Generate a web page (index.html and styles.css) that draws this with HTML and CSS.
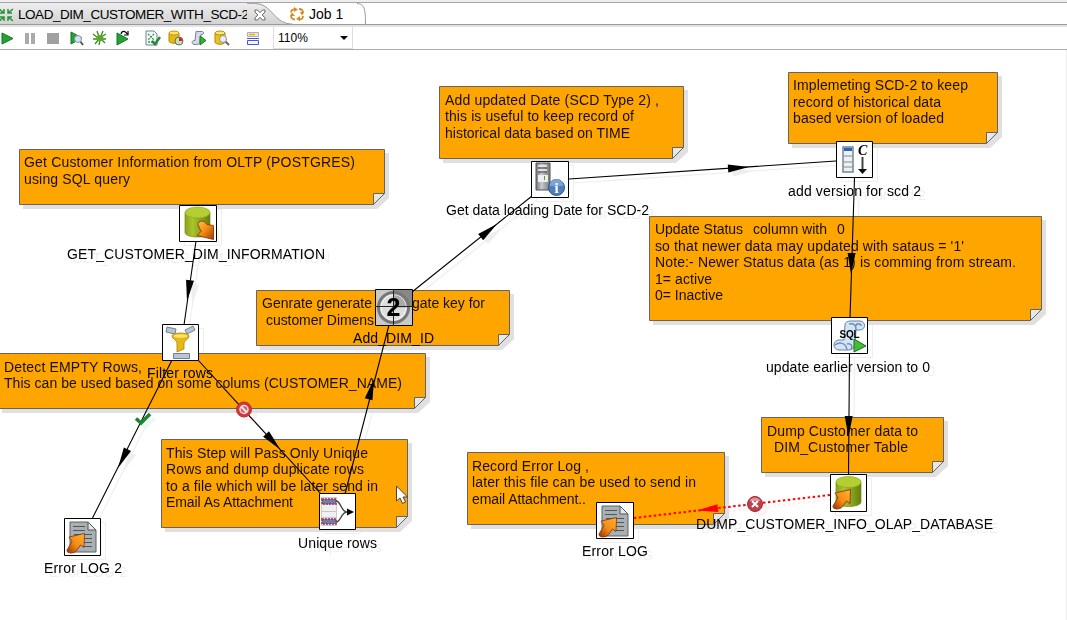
FILE: index.html
```html
<!DOCTYPE html>
<html lang="en">
<head>
<meta charset="utf-8">
<title>LOAD_DIM_CUSTOMER_WITH_SCD-2</title>
<link rel="stylesheet" href="styles.css">
</head>
<body>
<div class="app">
  <header class="tabs">
    <div class="tab tab-active">
      <svg class="tab-icon" viewBox="0 0 14 14"><g class="green-stroke"><path d="M0 1l5 4M5 1v4H1M14 1L9 5M9 1v4h4M0 13l5-4M5 13V9H1M14 13L9 9M9 13V9h4"/></g></svg>
      <span class="tab-title">LOAD_DIM_CUSTOMER_WITH_SCD-2</span>
      <svg class="tab-close" viewBox="0 0 12 12"><path d="M1 1h2.500L6 3.700 8.500 1H11v2L8.200 6 11 9v2H8.500L6 8.300 3.500 11H1V9l2.800-3L1 3z" fill="#fff" stroke="#666"/></svg>
    </div>
    <svg class="tab-curve" viewBox="0 0 48 22"><defs><linearGradient id="tabfill" x2="0" y2="1"><stop stop-color="#eee"/><stop offset="1" stop-color="#d2d2d2"/></linearGradient></defs><path d="M0 0H8C26 1 26 21 44 21H0z" fill="url(#tabfill)"/><path d="M0 .3H8C26 1 26 21 46 21.300" fill="none" stroke="#999"/></svg>
    <div class="tab tab-job">
      <svg class="job-icon" viewBox="0 0 14 14"><g fill="none" stroke="#dc8a20" stroke-width="1.800"><path d="M1 5.500C1 3 3 2 5.500 2.500M9 2c2.500 0 4 1.500 4 4M13 9c0 2.500-2 3.500-4 3.500M5 12.500C2.500 12.500 1 11 1 8.500"/></g><path d="M4 0l4 2.500L4 5zM10 5h4.500L12 8.500zM10 9v5l-4-2zM0 9l2-3.500L5 9z" fill="#dc8a20"/></svg>
      <span>Job 1</span>
    </div>
    <svg class="tab-end" viewBox="0 0 10 22"><path d="M0 .5C7 1 8.500 5 8.500 21" fill="none" stroke="#999"/></svg>
  </header>
  <nav class="toolbar">
    <svg class="tool" viewBox="0 0 16 16"><path d="M2 3l11 5.500L2 14z" fill="#23a337" stroke="#137522"/></svg>
    <svg class="tool" viewBox="0 0 16 16"><path d="M2 3h4v11H2zM8 3h4v11H8z" fill="#aaa"/></svg>
    <svg class="tool" viewBox="0 0 16 16"><path d="M1 3h12v11H1z" fill="#a0a0a0"/></svg>
    <svg class="tool" viewBox="0 0 16 16"><path d="M2 2l11 6L2 14z" fill="#23a337" stroke="#137522"/><path d="M11 11l3 4" stroke="#555" stroke-width="2"/><circle cx="9" cy="9" r="3.500" fill="#cfe3f4" stroke="#8897a5"/></svg>
    <svg class="tool" viewBox="0 0 16 16"><g fill="none" stroke="#3c8a1c" stroke-width="1.300"><path d="M1 4l5 4M5 1l2 6M14 4l-5 3M11 1L9 6M1 9h13M3 14l4-5M13 13L9 9M7 15l1-5"/></g><ellipse cx="8" cy="8" rx="3.500" ry="3" fill="#5aa826"/></svg>
    <svg class="tool" viewBox="0 0 16 16"><path d="M2 3l11 6L2 15z" fill="#23a337" stroke="#137522"/><path d="M6 4C7 0 11 1 12 4M13 1v4H9" fill="none" stroke="#000" stroke-width="1.200"/></svg>
    <svg class="tool group" viewBox="0 0 16 16"><path d="M1 1h8l3 3v11H1z" fill="#f4f8fa" stroke="#6d8594"/><path d="M3 4l6 6M9 4l-6 6M3 12h4" stroke="#329537" stroke-width="1.300" stroke-dasharray="2 1"/><path d="M7 11l3 3 5-7" fill="none" stroke="#228b36" stroke-width="2.500"/></svg>
    <svg class="tool" viewBox="0 0 16 16"><path d="M1 3v8c0 3 10 3 10 0V3z" fill="#e7b814" stroke="#b8860b"/><ellipse cx="6" cy="3" rx="5" ry="2" fill="#ffe36d" stroke="#c4940e"/><circle cx="11" cy="11" r="4" fill="#c7dcbd" stroke="#587a50"/><path d="M11 11V7.500a3.500 3.500 0 0 1 3.500 3.500z" fill="#e02020"/></svg>
    <svg class="tool" viewBox="0 0 16 16"><path d="M5 1.500h6c2 0 2 3 0 3h-1l-1 7c0 3-3 3-6 3-3-1-2-4 0-4h1z" fill="#d5dce8" stroke="#758194"/><path d="M9 6l6 4.500L9 15z" fill="#31b635" stroke="#15751b"/></svg>
    <svg class="tool" viewBox="0 0 16 16"><path d="M1 3v9c0 3 10 3 10 0V3z" fill="#edc319" stroke="#b08508"/><ellipse cx="6" cy="3" rx="5" ry="2" fill="#ffe66e" stroke="#ba8e11"/><path d="M11 11l4 4" stroke="#6c665c" stroke-width="2"/><circle cx="9" cy="9" r="3.500" fill="#e8f0f5" stroke="#8b9298"/></svg>
    <svg class="tool group-last" viewBox="0 0 16 16"><path d="M2.500 2.500h11v4h-11z" fill="#f5e9b5" stroke="#a9a9cf"/><path d="M4 4.500h6" stroke="#e6a91e" stroke-width="1.300"/><path d="M2.500 10.500h11v4h-11zM2 8.500h12" fill="#f1f3ff" stroke="#4656d5"/></svg>
    <div class="zoom"><span>110%</span><i class="caret"></i></div>
  </nav>
  <main class="canvas">
    <svg class="diagram" viewBox="0 50 1067 570">
      <defs>
        <linearGradient id="cyl"><stop stop-color="#8aa31a"/><stop offset=".3" stop-color="#aac42c"/><stop offset="1" stop-color="#637f0c"/></linearGradient>
        <linearGradient id="org" x2="1" y2="1"><stop stop-color="#ffc44b"/><stop offset=".5" stop-color="#f58a12"/><stop offset="1" stop-color="#a03a08"/></linearGradient>
        <linearGradient id="orgup" x1="1" x2="0" y2="1"><stop stop-color="#ffb436"/><stop offset=".55" stop-color="#f58a12"/><stop offset="1" stop-color="#8e3005"/></linearGradient>
        <linearGradient id="metal"><stop stop-color="#727980"/><stop offset=".4" stop-color="#c6cacd"/><stop offset="1" stop-color="#777"/></linearGradient>
        <path id="arrow" d="M0 0L-21-4V4z"/>
        <g id="database"><path d="M6 8v20c0 6 25 6 25 0V8z" fill="url(#cyl)" stroke="#738b17" stroke-width=".7"/><ellipse cx="18.500" cy="8" rx="12.500" ry="5.500" fill="#b5cf32" stroke="#8fa91e" stroke-width=".7"/></g>
        <path id="arrow-up" d="M5 19L20.500 15.500 20 29.500 16.500 27 13 32C11 36 2 36 3 32L8 23.500z" fill="url(#orgup)" stroke="#7c300b" stroke-width=".8"/>
        <g id="textfile"><path d="M6 4h18l8 8v22H6z" fill="#a9b0b3" stroke="#5a6265"/><path d="M24 4v8h8z" fill="#e5e8e9" stroke="#555"/><path d="M9 8.500h12M9 12.500h12M10 16.500h18M14 20.500h14M18 24.500h10M18 28.500h10" stroke="#50575a" stroke-width="1.200"/><use href="#arrow-up"/></g>
      </defs>

      <use class="flow-shadow" href="#flow" x="5" y="4"/>

      <g class="note-shadows">
        <path d="M23 153H389V198L377 209H23z"/><path d="M260 294H514V339L502 350H260z"/><path d="M2 357H430V402L418 413H2z"/><path d="M165 443H412V521L400 532H165z"/><path d="M443 90H688V152L676 163H443z"/><path d="M792 76H1002V137L990 148H792z"/><path d="M653 220H1046V314L1034 325H653z"/><path d="M765 421H948V466L936 477H765z"/><path d="M471 456H729V518L717 529H471z"/>
      </g>
      <g class="notes">
        <path d="M19.500 149.500H384.500V193.500L373.500 204.500H19.500z"/><path d="M256.500 290.500H509.500V334.500L498.500 345.500H256.500z"/><path d="M-1.500 353.500H425.500V397.500L414.500 408.500H-1.500z"/><path d="M161.500 439.500H407.500V516.500L396.500 527.500H161.500z"/><path d="M439.500 86.500H683.500V147.500L672.500 158.500H439.500z"/><path d="M788.500 72.500H997.500V132.500L986.500 143.500H788.500z"/><path d="M649.500 216.500H1041.500V309.500L1030.500 320.500H649.500z"/><path d="M761.500 417.500H943.500V461.500L932.500 472.500H761.500z"/><path d="M467.500 452.500H724.500V513.500L713.500 524.500H467.500z"/>
      </g>
      <g class="folds">
        <path d="M373.500 204.500V193.500H384.500z"/><path d="M498.500 345.500V334.500H509.500z"/><path d="M414.500 408.500V397.500H425.500z"/><path d="M396.500 527.500V516.500H407.500z"/><path d="M672.500 158.500V147.500H683.500z"/><path d="M986.500 143.500V132.500H997.500z"/><path d="M1030.500 320.500V309.500H1041.500z"/><path d="M932.500 472.500V461.500H943.500z"/><path d="M713.500 524.500V513.500H724.500z"/>
      </g>
      <g class="note-text">
        <text x="24" y="167" textLength="331">Get Customer Information from OLTP (POSTGRES)</text>
        <text x="24" y="184" textLength="106">using SQL query</text>
        <text x="262" y="308" textLength="110">Genrate generate</text>
        <text x="412" y="308" textLength="73">gate key for</text>
        <text x="266" y="325" textLength="108">customer Dimens</text>
        <text x="4" y="372" textLength="138">Detect EMPTY Rows,</text>
        <text x="4" y="388" textLength="398">This can be used based on some colums (CUSTOMER_NAME)</text>
        <text x="166" y="458" textLength="202">This Step will Pass Only Unique</text>
        <text x="166" y="474" textLength="198">Rows and dump duplicate rows</text>
        <text x="166" y="491" textLength="212">to a file which will be later send in</text>
        <text x="166" y="507" textLength="127">Email As Attachment</text>
        <text x="445" y="105" textLength="214">Add updated Date (SCD Type 2) ,</text>
        <text x="445" y="121" textLength="189">this is useful to keep record of</text>
        <text x="445" y="138" textLength="185">historical data based on TIME</text>
        <text x="793" y="90" textLength="175">Implemeting SCD-2 to keep</text>
        <text x="793" y="107" textLength="148">record of historical data</text>
        <text x="793" y="123" textLength="151">based version of loaded</text>
        <text x="655" y="234" textLength="88">Update Status</text>
        <text x="753" y="234" textLength="74">column with</text>
        <text x="837" y="234">0</text>
        <text x="655" y="251" textLength="309">so that newer data may updated with sataus = '1'</text>
        <text x="655" y="267" textLength="361">Note:- Newer Status data (as 1) is comming from stream.</text>
        <text x="655" y="284" textLength="57">1= active</text>
        <text x="655" y="300" textLength="68">0= Inactive</text>
        <text x="767" y="436" textLength="151">Dump Customer data to</text>
        <text x="774" y="452" textLength="134">DIM_Customer Table</text>
        <text x="472" y="471" textLength="117">Record Error Log ,</text>
        <text x="472" y="487" textLength="224">later this file can be used to send in</text>
        <text x="472" y="504" textLength="114">email Attachment..</text>
      </g>

      <g id="flow">
        <g class="hops">
          <path d="M196 241L184 325M172 360L92 519M198 360L321 494M345 494L389 325M412 292L532 196M569 179L836 161M854.500 178L850 318M849.500 353L848.500 475"/>
          <use href="#arrow" transform="translate(187 301) rotate(98.300)"/>
          <use href="#arrow" transform="translate(118 468) rotate(116.700)"/>
          <use href="#arrow" transform="translate(280.300 449.500) rotate(47.200)"/>
          <use href="#arrow" transform="translate(374 379) rotate(-75.200)"/>
          <use href="#arrow" transform="translate(497 224) rotate(-38.900)"/>
          <use href="#arrow" transform="translate(749 167) rotate(-3.900)"/>
          <use href="#arrow" transform="translate(851 274) rotate(91.600)"/>
          <use href="#arrow" transform="translate(848.500 437) rotate(90.500)"/>
        </g>
        <path class="error-hop" d="M830 495L634 518"/>
        <use class="error-arrow" href="#arrow" transform="translate(697 510.600) rotate(173.300)"/>

        <g transform="translate(179 205)"><path class="box" d="M.5.5h37v36H.5z"/><g transform="translate(0 -.5)"><use href="#database"/><path d="M19 20c0-4 6-5 9 0l6.500 1v14L18 31l4-4z" fill="url(#org)" stroke="#7c300b" stroke-width=".8"/></g></g>
        <g transform="translate(162 324)"><path class="box" d="M.5.5h36v36H.5z"/><g fill="#b8c5d2" stroke="#6f8194"><path d="M5 3l9 2-1 5-9-2zM23 6l8-4 2 4-8 4zM11.500 29.500h16v5h-16z"/></g><path d="M10 12c0-4 17-4 17 0 0 3-5 5-5 7v6l-7 3v-9c0-3-5-4-5-7z" fill="#e8b815" stroke="#a98112" stroke-width=".8"/><ellipse cx="18.500" cy="12" rx="7" ry="1.700" fill="#fae36f"/></g>
        <g transform="translate(375 289)"><path d="M.5.5h37v36H.5z" fill="#c9c9c9" stroke="#000"/><path d="M18 18V1h19v17z" fill="#888"/><circle cx="18.500" cy="18.500" r="15" fill="none" stroke="#777" stroke-width="3"/><circle cx="18.500" cy="18.500" r="12.500" fill="#ddd" stroke="#eee" stroke-width="1.500"/><path d="M18.500 18.500V6a12.500 12.500 0 0 1 12.500 12.500z" fill="#aaa"/><path d="M0 17.500h38M18.500 0v37" stroke="#222"/><text class="countdown" x="18.500" y="27" text-anchor="middle">2</text></g>
        <g transform="translate(531 161)"><path class="box" d="M.5.5h37v36H.5z"/><path d="M5 2h14v27H5z" fill="url(#metal)" stroke="#555"/><path d="M7 5h9M7 9h9" stroke="#eee" stroke-width="1.500"/><path d="M7 7h9M7 11h9" stroke="#454545"/><path d="M7 14h10v7H7z" fill="#eee"/><path d="M13.500 15v4" stroke="#4aa24a"/><circle cx="25.500" cy="26.500" r="8" fill="#507dbb" stroke="#29528b"/><path d="M18.500 25a7 7 0 0 1 14 0z" fill="#7ba4d6"/><text class="info-letter" x="25.500" y="32" text-anchor="middle">i</text></g>
        <g transform="translate(836 141)"><path class="box" d="M.5.5h36v36H.5z"/><path d="M7 6h10v25H7z" fill="#eef1f4" stroke="#6f8795" stroke-width="1.500"/><path d="M8 7h8v3H8z" fill="#2864bd"/><path d="M8 15h8M8 21h8M8 26h8" stroke="#a5acb2" stroke-width="1.500"/><text class="counter-letter" x="22" y="14">C</text><path d="M26.500 16v13" stroke="#444" stroke-width="2"/><path d="M22 28h9l-4.500 5z" fill="#111"/></g>
        <g transform="translate(831 317)"><path class="box" d="M.5.5h36v36H.5z"/><path d="M14 8C14 5 17 4 20 4h9a4.500 4.500 0 0 1 0 9h-4l-1 15c-1 3-3 5-6 5H8a5 5 0 0 1 0-10h5z" fill="#d3e4f5" stroke="#6383a7"/><path d="M18 7c5-1 7 1 7 6M25 9c0-3 5-3 5 0M4 28c4-3 11-3 12 5M16 27c4-1 6 2 4 5" fill="none" stroke="#6d92b8" stroke-width="1.500"/><text class="sql-letters" x="8.500" y="21" textLength="20">SQL</text><path d="M23 22l12 7-12 6z" fill="#45bd36" stroke="#176f1c"/></g>
        <g transform="translate(830 474)"><path class="box" d="M.5.500h36v37H.5z"/><use href="#database"/><use href="#arrow-up"/></g>
        <g transform="translate(596 502)"><path class="box" d="M.5.500h37v36H.5z"/><use href="#textfile"/></g>
        <g transform="translate(64 518)"><path class="box" d="M.5.500h36v37H.5z"/><use href="#textfile"/></g>
        <g transform="translate(319 493)"><path class="box" d="M.5.500h36v36H.5z"/><path d="M2.500 4.500h15v28h-15z" fill="#f0f0f2" stroke="#c9cbd0"/><path d="M3 11.500h14M3 18.500h14M3 24.500h14" stroke="#c4c6cb"/><path d="M3 6h14v5H3zM3 26h14v5H3z" fill="#6980ae" stroke="#b52c4a" stroke-width="1.500" stroke-dasharray="2 1"/><path d="M17 8c5 0 5 11 11 11M17 29c5 0 5-10 11-10h4" fill="none" stroke="#444" stroke-width="1.300"/><path d="M28 15.500l7 3.500-7 3.500z"/></g>

        <path d="M136 418.500l5 4.500 9-9" fill="none" stroke="#1c8435" stroke-width="3.500"/>
        <g transform="translate(244 409.500)"><circle r="7.500" fill="#d3363a" stroke="#b93035"/><circle r="4" fill="#d95b5d" stroke="#f4dfdf" stroke-width="1.500"/><path d="M-3-3l6 6" stroke="#f4e8e8" stroke-width="2"/></g>
        <g transform="translate(755 504)"><circle r="7.500" fill="#bd4249" stroke="#9c2832"/><path d="M-5.500-3a6 6 0 0 1 11 0z" fill="#dc9298"/><path d="M-3-3l6 6M3-3l-6 6" stroke="#fff" stroke-width="2"/></g>

        <g class="labels">
          <text x="67" y="259" textLength="258">GET_CUSTOMER_DIM_INFORMATION</text>
          <text x="147" y="378" textLength="66">Filter rows</text>
          <text x="44" y="573" textLength="78">Error LOG 2</text>
          <text x="353" y="343" textLength="81">Add_DIM_ID</text>
          <text x="298" y="548" textLength="79">Unique rows</text>
          <text x="446" y="215" textLength="203">Get data loading Date for SCD-2</text>
          <text x="788" y="196" textLength="133">add version for scd 2</text>
          <text x="766" y="372" textLength="164">update earlier version to 0</text>
          <text x="696" y="529" textLength="297">DUMP_CUSTOMER_INFO_OLAP_DATABASE</text>
          <text x="582" y="556" textLength="66">Error LOG</text>
        </g>
      </g>
      <path d="M396.500 486v15l3.500-3 2.500 5.500 3-1.500-2.500-5h4.500z" fill="#fff" stroke="#333" stroke-width=".9"/>
    </svg>
  </main>
</div>
</body>
</html>
```
FILE: styles.css
```css
body {
  margin: 0;
  background: #fff;
  color: #000;
  font-family: "Liberation Sans", Arial, sans-serif;
}

.app {
  display: flex;
  flex-direction: column;
  width: 1067px;
  height: 620px;
  overflow: hidden;
}

.tabs {
  display: flex;
  box-sizing: border-box;
  height: 27px;
  border-top: 2px solid #eee;
  border-bottom: 2px solid #e3e3e3;
  box-shadow: inset 0 1px #a6a6b0, inset 0 -1px #999;
  font-size: 14px;
  line-height: 22px;
}

.tab {
  display: flex;
  flex: none;
  align-items: center;
  white-space: nowrap;
}

.tab-active {
  box-sizing: border-box;
  width: 247px;
  height: 21px;
  margin-top: 1px;
  background: linear-gradient(#eee, #d2d2d2);
}

.tab-icon {
  flex: none;
  width: 14px;
  height: 14px;
  margin: 2px 5px 0 -1px;
}

.green-stroke {
  fill: none;
  stroke: #279336;
  stroke-width: 1.5;
}

.tab-title {
  flex: none;
  width: 230px;
  padding-top: 2px;
  font-size: 13.5px;
  letter-spacing: -0.46px;
}

.tab-close {
  flex: none;
  width: 12px;
  height: 12px;
  margin: 2px 0 0 6px;
  z-index: 1;
}

.tab-curve {
  flex: none;
  width: 48px;
  height: 22px;
  margin: 1px -6px 0 0;
}

.tab-job {
  width: 70px;
  height: 22px;
  padding-top: 1px;
}

.job-icon {
  flex: none;
  width: 14px;
  height: 14px;
  margin: 0 5px 0 1px;
}

.tab-end {
  flex: none;
  width: 10px;
  height: 22px;
  margin: 1px 0 0 -2px;
}

.toolbar {
  display: flex;
  align-items: center;
  gap: 7px;
  box-sizing: border-box;
  height: 23px;
  border-bottom: 1px solid #aaa;
}

.tool {
  flex: none;
  width: 16px;
  height: 16px;
}

.group {
  margin-left: 7px;
}

.group-last {
  margin-left: 8px;
}

.zoom {
  display: flex;
  align-items: center;
  justify-content: space-between;
  box-sizing: border-box;
  width: 80px;
  height: 22px;
  margin-left: 5px;
  padding: 0 4px;
  border: 1px solid #ddd;
  border-top: 0;
  font-size: 12px;
}

.caret {
  border: 4px solid transparent;
  border-top-color: #000;
  border-bottom: 0;
}

.canvas {
  box-sizing: border-box;
  height: 570px;
  box-shadow: inset -1px 0 #eee;
}

.diagram {
  display: block;
  width: 1067px;
  height: 570px;
}

.diagram text {
  font-size: 14px;
}

.flow-shadow {
  opacity: 0.07;
}

.note-shadows {
  fill: #e0e0e0;
}

.notes {
  fill: #ffa500;
  stroke: #646464;
}

.folds {
  fill: #e7e7e7;
  stroke: #646464;
}

.note-text {
  fill: #171000;
}

.hops {
  fill: #000;
}

.hops path {
  stroke: #000;
  stroke-width: 1.1;
}

.error-hop {
  stroke: #f00;
  stroke-width: 2;
  stroke-dasharray: 2.5 2.5;
}

.error-arrow {
  fill: #f00;
}

.box {
  fill: #fff;
  stroke: #000;
}

.diagram .countdown {
  font-size: 25px;
  font-weight: bold;
}

.diagram .info-letter {
  fill: #fff;
  font: bold 15px "Liberation Serif", serif;
}

.diagram .counter-letter {
  font: italic bold 14px "Liberation Serif", serif;
}

.diagram .sql-letters {
  font-size: 10px;
  font-weight: bold;
}
```
